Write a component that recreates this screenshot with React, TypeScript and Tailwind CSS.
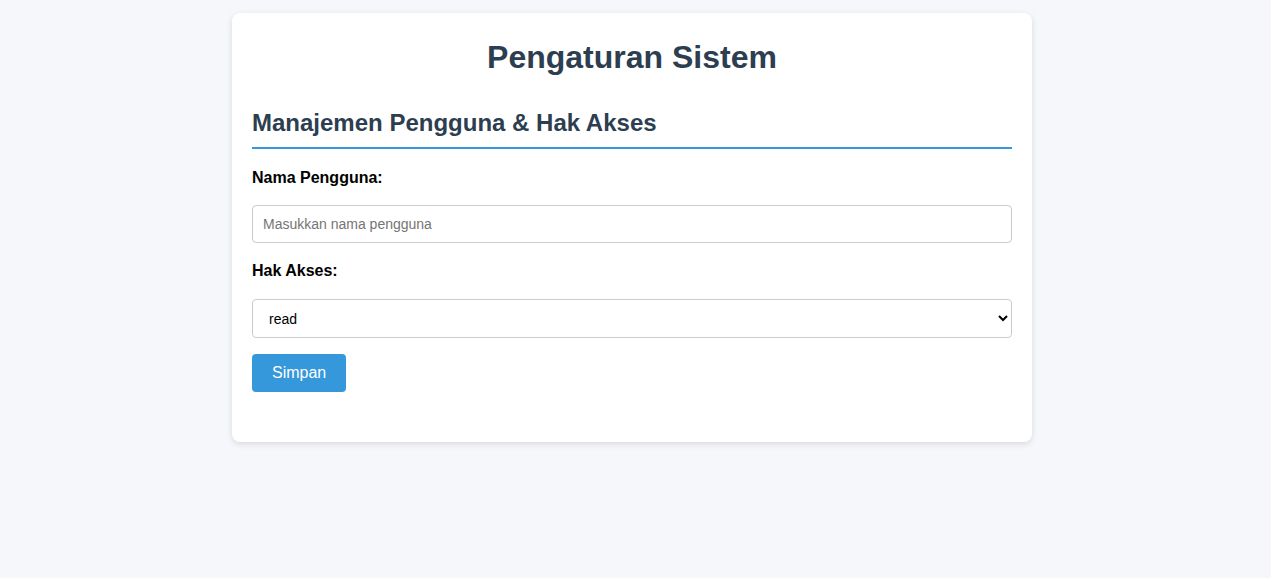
import { useState } from "react";

export default function App() {
  const [username, setUsername] = useState("");
  const [role, setRole] = useState("read");

  return (
    <div className="min-h-screen bg-[#f5f7fa] pt-[13px] pr-[7px] font-['Liberation_Sans',Arial,sans-serif]">
      <div className="mx-auto w-[800px] rounded-lg bg-white px-5 pt-[26px] pb-[50px] shadow-[0_2px_6px_rgba(0,0,0,0.12)]">
        <h1 className="text-center text-[32px] leading-[37px] font-bold text-[#2c3e50]">Pengaturan Sistem</h1>

        <h2 className="mt-[33px] border-b-2 border-[#3498db] pb-[10px] text-[24px] leading-[28px] font-bold text-[#2c3e50]">
          Manajemen Pengguna &amp; Hak Akses
        </h2>

        <form onSubmit={(e) => e.preventDefault()}>
          <label htmlFor="username" className="mt-[20px] block text-base leading-[18px] font-bold text-black">
            Nama Pengguna:
          </label>
          <input
            id="username"
            type="text"
            value={username}
            onChange={(e) => setUsername(e.target.value)}
            placeholder="Masukkan nama pengguna"
            className="mt-[18px] block h-[38px] w-full rounded border border-[#ccc] px-[10px] text-sm text-black placeholder:text-[#757575] outline-none"
          />

          <label htmlFor="role" className="mt-[19px] block text-base leading-[18px] font-bold text-black">
            Hak Akses:
          </label>
          <select
            id="role"
            value={role}
            onChange={(e) => setRole(e.target.value)}
            className="mt-[19px] block h-[39px] w-full rounded border border-[#ccc] bg-white px-[12px] text-sm text-black outline-none"
          >
            <option value="read">read</option>
            <option value="write">write</option>
            <option value="admin">admin</option>
          </select>

          <button
            type="submit"
            className="mt-[16px] block h-[38px] rounded bg-[#3498db] px-5 text-base text-white hover:bg-[#2980b9]"
          >
            Simpan
          </button>
        </form>
      </div>
    </div>
  );
}
